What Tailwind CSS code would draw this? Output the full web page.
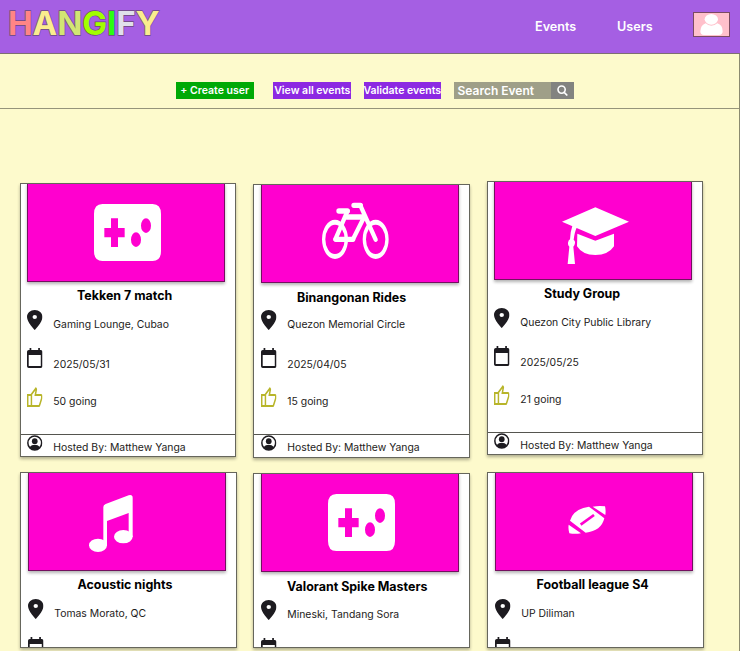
<!DOCTYPE html>
<html lang="en">
<head>
<meta charset="utf-8">
<title>Hangify</title>
<script src="https://cdn.jsdelivr.net/npm/@tailwindcss/browser@4"></script>
</head>
<body class="bg-[#fdfacc] font-['Inter',sans-serif] w-[740px] h-[651px] overflow-hidden">
<svg class="hidden">
  <symbol id="pin" viewBox="5 2 14 20" preserveAspectRatio="none"><path d="M12 2C8.130 2 5 5.130 5 9c0 5.250 7 13 7 13s7-7.750 7-13c0-3.870-3.130-7-7-7zm0 9a2 2 0 1 1 0-4 2 2 0 0 1 0 4z"/></symbol>
  <symbol id="cal" viewBox="3 2 18 20" preserveAspectRatio="none"><path d="M19 4h-1V2h-2v2H8V2H6v2H5c-1.100 0-2 .9-2 2v14c0 1.100.9 2 2 2h14c1.100 0 2-.9 2-2V6c0-1.100-.9-2-2-2zm0 16H5V9h14v11z"/></symbol>
  <symbol id="like" viewBox="80 -920 840 800" preserveAspectRatio="none"><path d="M720-120H280v-520l280-280 50 50q7 7 11.500 19t4.500 23v14l-44 174h258q32 0 56 24t24 56v80q0 7-2 15t-4 15L794-168q-9 20-30 34t-44 14Zm-360-80h360l120-280v-80H480l54-220-174 174v406Zm-80-440v80H160v360h120v80H80v-520h200Z"/></symbol>
  <symbol id="host" viewBox="0 0 46 47" preserveAspectRatio="none"><circle cx="23" cy="23.500" r="20.500" fill="none" stroke="currentColor" stroke-width="4.500"/><circle cx="23" cy="18" r="8.500"/><path d="M7 36Q14 29 23 29T39 36Q32 44 23 44T7 36Z"/></symbol>
</svg>

<div class="w-[740px] h-[651px] flex flex-col">
  <header class="h-[54px] shrink-0 bg-[#a55fe3] border-b border-[#7d6e72] flex items-center">
    <h1 class="w-[526px] pl-[8px] -mt-[7px] text-[33px] leading-[40px] font-bold tracking-[-0.050px] [-webkit-text-stroke:1.300px_#6b4a7c] [paint-order:stroke_fill]"><span class="text-[#ff8585]">H</span><span class="text-[#faec8e]">A</span><span class="text-[#d2e673]">N</span><span class="text-[#a2ff00]">G</span><span class="text-[#2bff0f]">I</span><span class="text-[#e0e0ea]">F</span><span class="text-[#faec8e]">Y</span></h1>
    <nav class="flex pt-[1px] text-[12.600px] font-semibold text-white">
      <a class="w-[82px] pl-[9px]">Events</a><a class="w-[76px] pl-[9px]">Users</a>
    </nav>
    <div class="ml-[9px] -mt-[5px] w-[37px] h-[25px] bg-[#ffc0cb] border border-[#7a4b62]">
      <svg class="w-[35px] h-[23px]" viewBox="0 0 105 69" fill="#fff"><ellipse cx="52" cy="19" rx="20" ry="16"/><path d="M35 31Q42 38 52 38T70 31Q86 36 86 55Q86 66 74 66H30Q19 66 19 55Q20 36 35 31Z"/></svg>
    </div>
  </header>

  <main class="flex-1 border-r border-[#8b8a70]">
    <div class="h-[55px] border-b border-[#96947a] flex items-center pl-[176px] pt-[19px] text-[10.500px] font-semibold text-white whitespace-nowrap">
      <button class="w-[77.500px] h-[17px] bg-[#00a905]">+ Create user</button>
      <button class="ml-[19.500px] w-[77.500px] h-[17px] bg-[#8c29e2] flex items-center justify-center pl-[1px]">View all events</button>
      <button class="ml-[13px] w-[77.500px] h-[17px] bg-[#8c29e2] flex items-center justify-center pt-[1px]">Validate events</button>
      <div class="ml-[13px] w-[97px] h-[17px] bg-[#9f9f88] flex items-center pl-[3.500px] pt-[1px] text-[12px]">Search Event</div>
      <div class="w-[22.500px] h-[17px] bg-[#828380] flex items-center justify-center"><svg class="w-[11px] h-[11px]" viewBox="0 0 11 11" fill="none" stroke="#fff" stroke-width="1.600"><circle cx="4.600" cy="4.600" r="3.600"/><path d="M7.200 7.400 10.300 10.500"/></svg></div>
    </div>
    <div id="rows" class="pl-[20px]"></div>
  </main>
</div>

<script>
const pad = '<path fill-rule="evenodd" d="M277 87H428Q453 87 453 117V228Q453 258 428 258H277Q252 258 252 228V117Q252 87 277 87ZM303 130V159H283V187H303V216H324V187H344V159H324V130ZM393 152A15 22 0 1 0 423 152A15 22 0 1 0 393 152ZM363 194A15 22 0 1 0 393 194A15 22 0 1 0 363 194Z"/>';
const art = {
  game: ['51 24 594 297', pad],
  bike: ['48 28 594 297', '<path fill-rule="evenodd" d="M231 194A39 59 0 1 0 309 194A39 59 0 1 0 231 194ZM241 194A29 44 0 1 0 299 194A29 44 0 1 0 241 194ZM353 194A39 59 0 1 0 431 194A39 59 0 1 0 353 194ZM363 194A29 44 0 1 0 421 194A29 44 0 1 0 363 194Z"/><path fill="none" stroke="#fff" stroke-width="13" stroke-linecap="round" stroke-linejoin="round" d="M307 110 271 194M346 92 392 195M324 194 357 128"/><path fill="none" stroke="#fff" stroke-width="16" stroke-linecap="round" d="M282 109H307M327 92H346M306 127H355M273 194H323"/>'],
  cap: ['42 33 594 297', '<path d="M246 155 346 112 447 155 346 198ZM292 191 346 212 402 191V229Q385 255 346 255T291 229ZM277 168 290 173Q284 185 281 209Q286 213 285 219Q284 227 280 230L285 282H263L268 230Q263 225 264 218Q265 211 270 208Q271 185 277 168Z"/>'],
  music: ['54 38 594 297', '<ellipse cx="264" cy="258" rx="27" ry="20"/><ellipse cx="340" cy="232" rx="28" ry="20"/><path d="M280 245V143Q280 137 287 134L356 108Q368 105 368 116V233H356V161L291 185V258H280Z"/>'],
  ball: ['45 36 594 297', '<path d="M270 182Q280 147 327 140L373 175Q364 213 317 218ZM338 140Q357 136 375 139Q378 152 376 165ZM266 194 303 220Q285 223 268 220Q264 207 266 194Z"/><path d="M302 194 342 165" stroke="#ff00cf" stroke-width="8"/>']
};
const rows = [
  { top: 72, cards: [
    { art:'game', title:'Tekken 7 match', x:57, place:'Gaming Lounge, Cubao', date:'2025/05/31', going:'50 going', dy:2, gap:0, w:216, b:6, h:274 },
    { art:'bike', title:'Binangonan Rides', x:44, ty:1, place:'Quezon Memorial Circle', date:'2025/04/05', going:'15 going', dy:3, up:-1, gap:17, w:217, b:7, h:274 },
    { art:'cap', title:'Study Group', x:57, place:'Quezon City Public Library', date:'2025/05/25', going:'21 going', dy:0, gap:17, w:216, b:6, h:274 }
  ]},
  { top: 14, cards: [
    { art:'music', title:'Acoustic nights', x:57.5, place:'Tomas Morato, QC', dy:0, gap:0, w:217, b:7, h:175.5 },
    { art:'game', title:'Valorant Spike Masters', x:34, ty:1, place:'Mineski, Tandang Sora', dy:1, gap:16, w:217, b:7, h:175 },
    { art:'ball', title:'Football league S4', x:49.5, place:'UP Diliman', dy:0, gap:17, w:217, b:7, h:175.5 }
  ]}
];
const line = (icon, color, text, h, t) => `<li class="flex items-start" style="height:${h}px"><svg class="w-[15.500px] h-[20px] ${color} fill-current"><use href="#${icon}"/></svg>${text ? `<span class="ml-[10.500px] leading-[16px]" style="margin-top:${t}px">${text}</span>` : ''}</li>`;
document.getElementById('rows').innerHTML = rows.map(r => `<section class="flex items-start" style="padding-top:${r.top}px;height:${r.top === 72 ? 349 : 190}px">` + r.cards.map(c => `
  <article class="shrink-0 bg-white overflow-hidden border border-[#66665c] shadow-[0_2px_3px_rgba(0,0,0,0.3)] text-[10.400px] text-[#1d1b20]" style="width:${c.w}px;margin-top:${c.dy}px;margin-left:${c.gap}px;height:${c.h}px">
    <div class="-mt-[1px] w-[198px] h-[99px] bg-[#ff00cf] shadow-[inset_0_0_0_1px_#73105f,0_2px_3px_rgba(0,0,0,0.3)]" style="margin-left:${c.b}px"><svg class="w-[198px] h-[99px]" viewBox="${art[c.art][0]}" fill="#fff">${art[c.art][1]}</svg></div>
    <h2 class="h-[28px] pt-[6px] leading-[16px] text-[12.450px] font-bold text-black whitespace-nowrap" style="padding-left:${c.x - 1}px"><span class="relative" style="top:${c.ty || 0}px">${c.title}</span></h2>
    <ul class="whitespace-nowrap" style="margin-left:${c.b + .3}px;margin-top:${c.up || 0}px">
      ${line('pin', 'text-[#1d1b20]', c.place, 38, 6.9)}${line('cal', 'text-[#1d1b20]', c.date, 38.5, 8.9)}${c.going ? line('like', 'text-[#b8b52a]', c.going, 47.5, 7.4) : ''}
    </ul>
    ${c.date ? `<footer class="border-t border-[#55554f] h-[24px] flex items-start whitespace-nowrap" style="padding-left:${c.b + .3}px"><svg class="w-[15.500px] h-[16px] -mt-[0.5px] fill-current"><use href="#host"/></svg><span class="ml-[10.500px] mt-[4.900px] leading-[16px]">Hosted By: Matthew Yanga</span></footer>` : ''}
  </article>`).join('') + '</section>').join('');
</script>
</body>
</html>
